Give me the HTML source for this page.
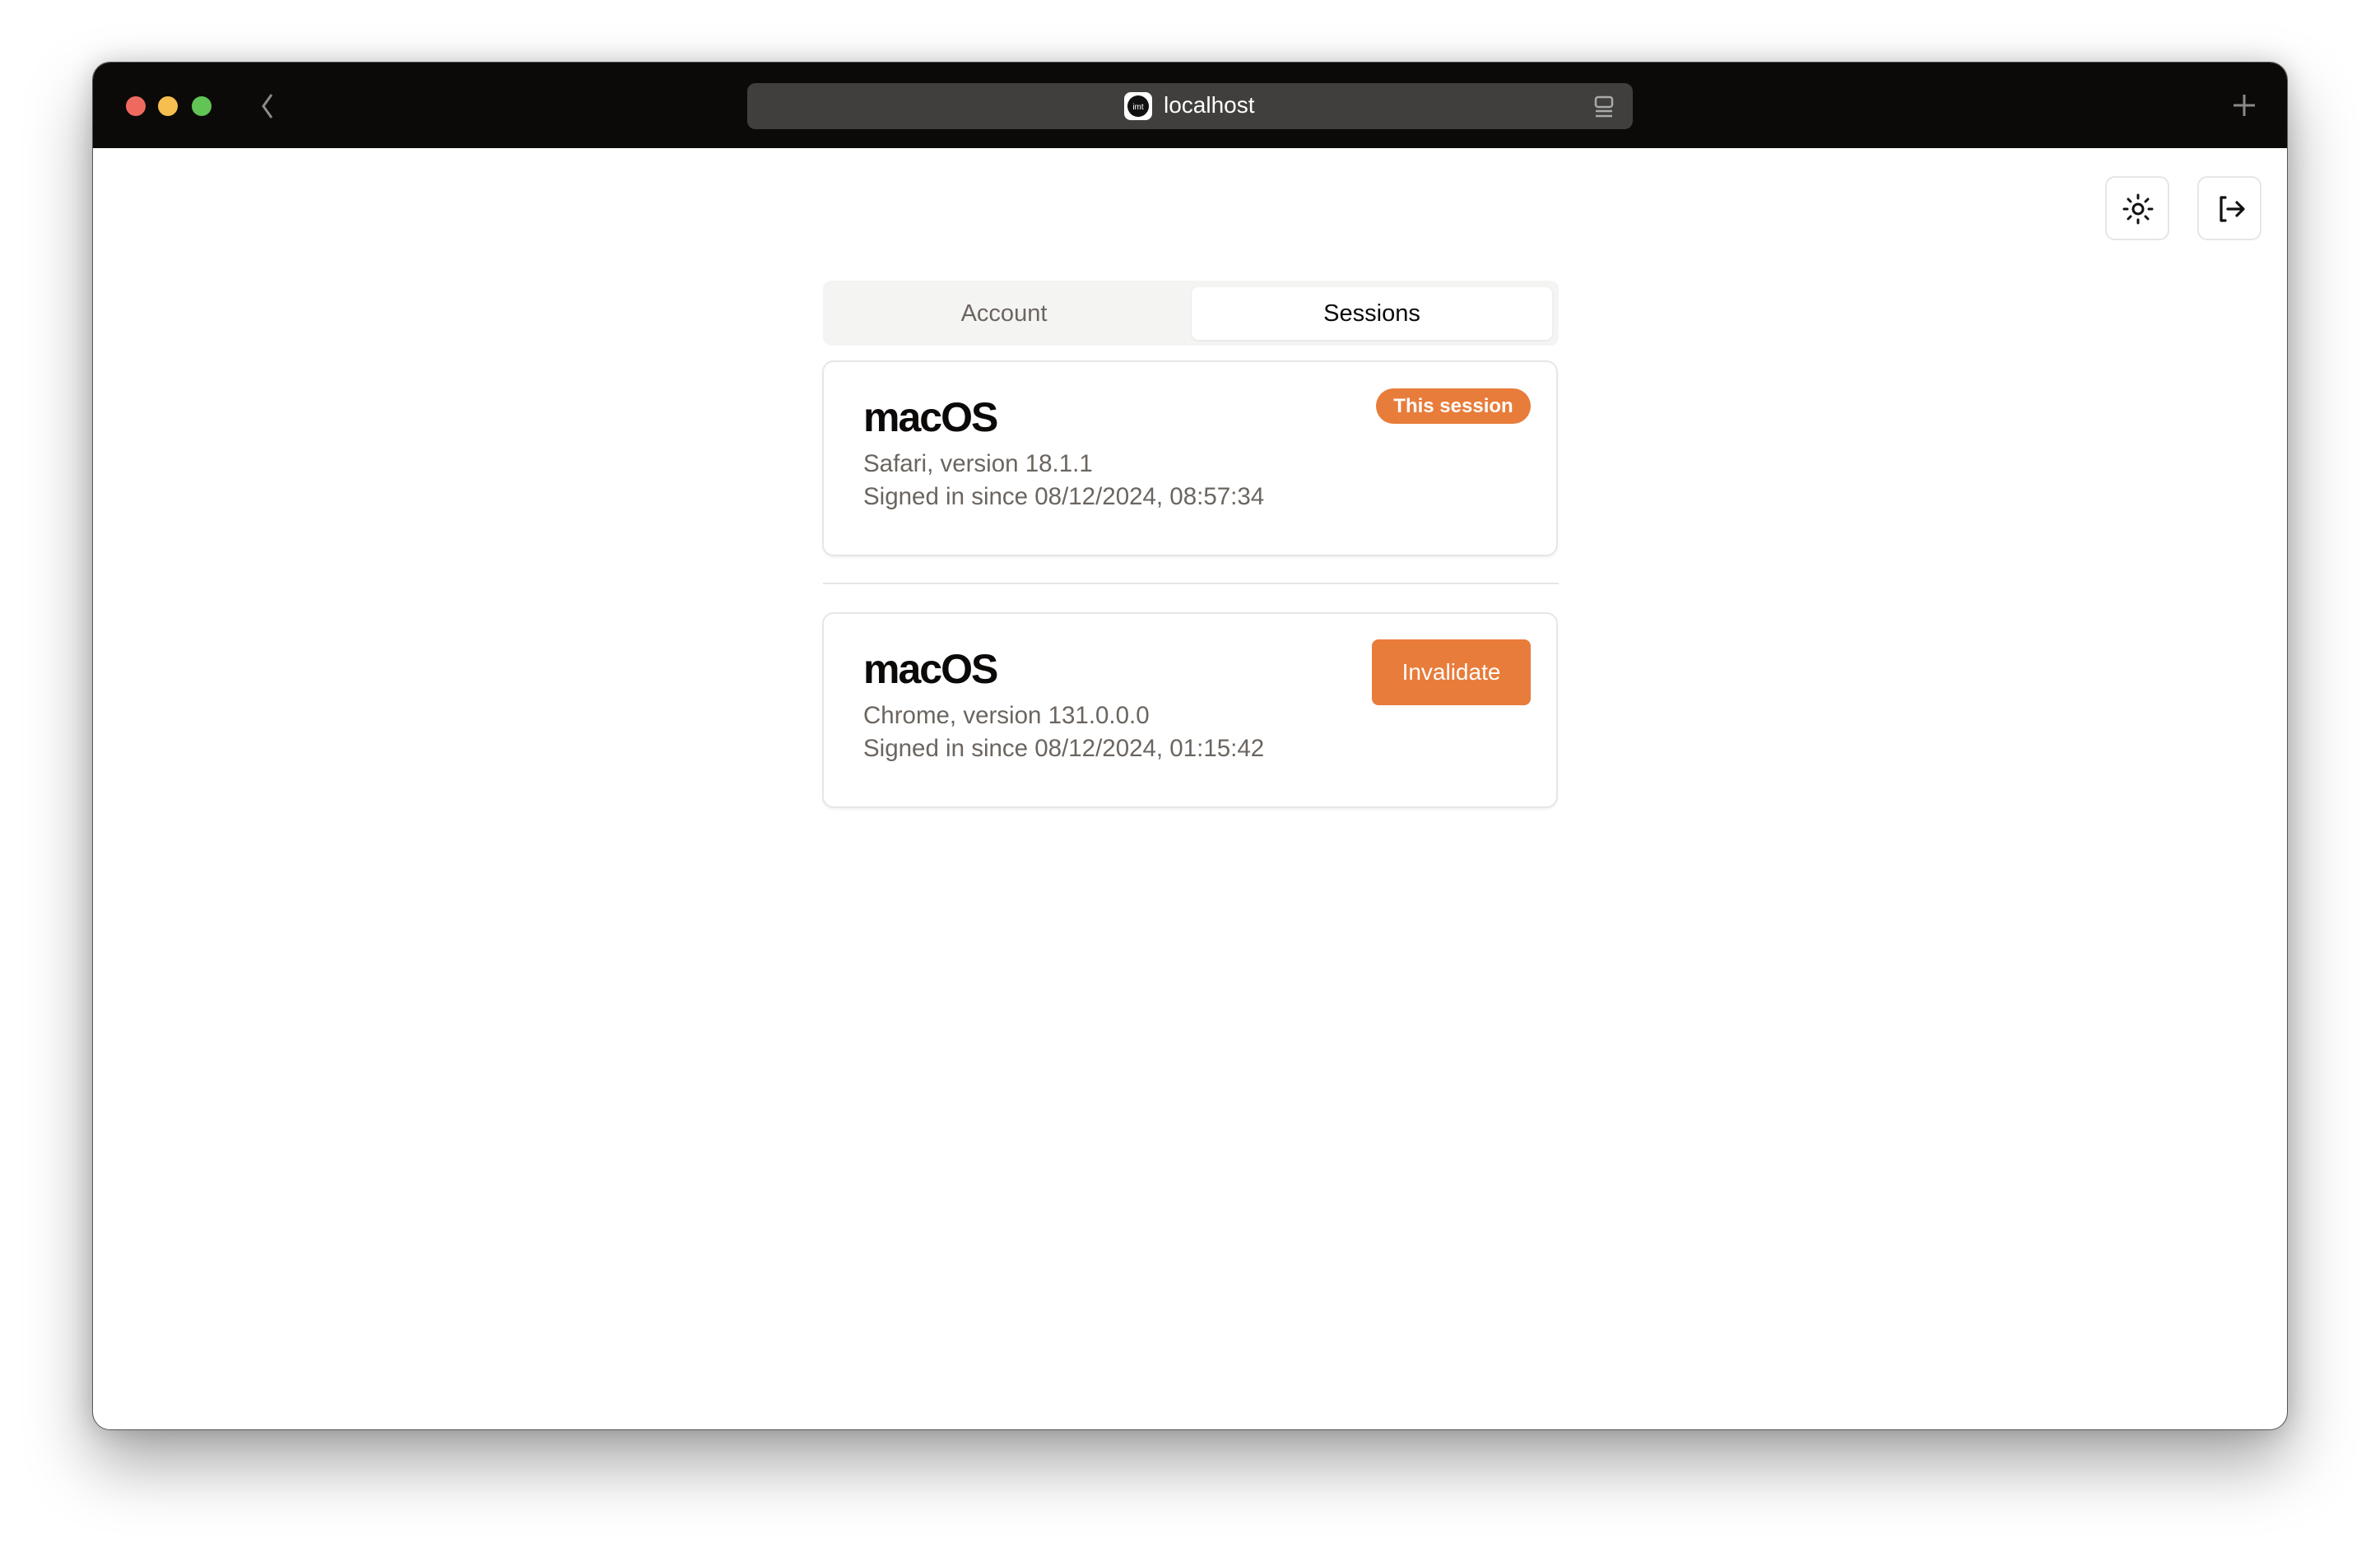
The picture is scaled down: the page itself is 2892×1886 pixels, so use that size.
<!DOCTYPE html>
<html><head><meta charset="utf-8"><style>
*{margin:0;padding:0;box-sizing:border-box}
body{width:2892px;height:1886px;background:#fff;position:relative;overflow:hidden;font-family:"Liberation Sans",sans-serif}
.win{position:absolute;left:112px;top:75px;width:2668px;height:1663px;border-radius:22px;background:#fff;overflow:hidden;box-shadow:0 40px 80px rgba(0,0,0,.35),0 0 30px rgba(0,0,0,.18);border:1px solid #555}
.bar{position:absolute;left:0;top:0;width:100%;height:104px;background:#0b0a08}
.dot{position:absolute;top:41px;width:24px;height:24px;border-radius:50%}
.url{position:absolute;left:795px;top:25px;width:1076px;height:56px;background:#403f3d;border-radius:10px}
.abs{position:absolute}
.tabs{position:absolute;left:887px;top:265px;width:894px;height:79px;background:#f4f4f3;border-radius:10px}
.tab{position:absolute;top:8px;height:64px;line-height:64px;text-align:center;font-size:29px}
.card{position:absolute;left:886px;width:894px;height:238px;border:2px solid #e6e6e6;border-radius:14px;box-shadow:0 2px 3px rgba(0,0,0,.05)}
.t{position:absolute;left:48px;font-size:50px;font-weight:bold;color:#0c0a09;letter-spacing:-2px}
.s{position:absolute;left:48px;font-size:29.5px;color:#6b6560}
.ib{position:absolute;top:138px;width:78px;height:78px;border:2px solid #e6e6e6;border-radius:12px}
</style></head><body>
<div class="win">
 <div class="bar">
  <div class="dot" style="left:40px;background:#ee6a5f"></div>
  <div class="dot" style="left:79px;background:#f5be4f"></div>
  <div class="dot" style="left:120px;background:#61c454"></div>
  <svg class="abs" style="left:200px;top:36px" width="24" height="34"><path d="M17 3 L7 17 L17 31" stroke="#8a8a8a" stroke-width="3" fill="none"/></svg>
  <div class="url">
   <svg class="abs" style="left:457px;top:10px" width="36" height="36"><rect x="1" y="1" width="34" height="34" rx="8" fill="#fff"/><circle cx="18" cy="18" r="13" fill="#111"/><text x="18" y="22" font-size="10" fill="#fff" text-anchor="middle" font-family="Liberation Sans">imt</text></svg>
   <div class="abs" style="left:506px;top:11px;font-size:28px;color:#fff">localhost</div>
   <svg class="abs" style="left:1028px;top:14px" width="26" height="30"><rect x="3" y="3" width="20" height="12" rx="3" stroke="#aaa" stroke-width="2.5" fill="none"/><path d="M3 20h20M3 26h20" stroke="#aaa" stroke-width="2.5"/></svg>
  </div>
  <svg class="abs" style="left:2598px;top:36px" width="32" height="32"><path d="M16 3v26M3 16h26" stroke="#8a8a8a" stroke-width="3"/></svg>
 </div>
 <div class="ib" style="left:2445px"><svg class="abs" style="left:18px;top:18px" width="40" height="40" viewBox="0 0 40 40"><circle cx="20" cy="20" r="6" stroke="#111" stroke-width="3" fill="none"/><g stroke="#111" stroke-width="3" stroke-linecap="round"><path d="M20 3v4M20 33v4M3 20h4M33 20h4M8 8l3 3M29 29l3 3M8 32l3-3M29 11l3-3"/></g></svg></div>
 <div class="ib" style="left:2557px"><svg class="abs" style="left:18px;top:18px" width="40" height="40" viewBox="0 0 40 40"><path d="M14 6H9v28h5M17 20h18M28 12l8 8-8 8" stroke="#111" stroke-width="3.2" fill="none" stroke-linecap="round" stroke-linejoin="round"/></svg></div>
 <div class="tabs">
  <div class="tab" style="left:0;width:440px;color:#6b6560">Account</div>
  <div class="tab" style="left:448px;width:438px;background:#fff;border-radius:8px;color:#0c0a09;box-shadow:0 1px 3px rgba(0,0,0,.08)">Sessions</div>
 </div>
 <div class="card" style="top:362px">
  <div class="t" style="top:38px">macOS</div>
  <div class="s" style="top:107px">Safari, version 18.1.1</div>
  <div class="s" style="top:147px">Signed in since 08/12/2024, 08:57:34</div>
  <div class="abs" style="left:671px;top:32px;width:188px;height:43px;border-radius:22px;background:#e87c3a;color:#fff;font-weight:bold;font-size:24px;line-height:43px;text-align:center">This session</div>
 </div>
 <div class="abs" style="left:887px;top:632px;width:894px;height:2px;background:#e6e6e6"></div>
 <div class="card" style="top:668px">
  <div class="t" style="top:38px">macOS</div>
  <div class="s" style="top:107px">Chrome, version 131.0.0.0</div>
  <div class="s" style="top:147px">Signed in since 08/12/2024, 01:15:42</div>
  <div class="abs" style="left:666px;top:31px;width:193px;height:80px;border-radius:8px;background:#e87c3a;color:#fff;font-size:28px;line-height:80px;text-align:center">Invalidate</div>
 </div>
</div>
</body></html>
